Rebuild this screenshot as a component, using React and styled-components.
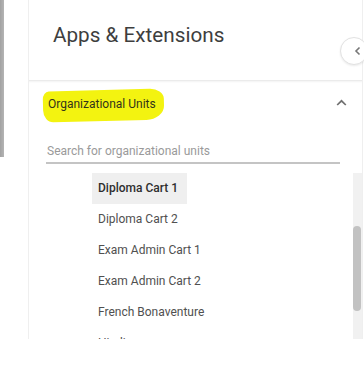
import React from "react";
import styled, { createGlobalStyle } from "styled-components";

const Global = createGlobalStyle`
  html, body { margin: 0; padding: 0; background: #fff; }
  body { font-family: Roboto, "Liberation Sans", Arial, sans-serif; }
  * { box-sizing: border-box; }
`;

const Page = styled.div`
  position: relative;
  width: 364px;
  height: 366px;
  overflow: hidden;
  display: flex;
  align-items: flex-start;
  gap: 24px;
`;

const EdgeBar = styled.div`
  width: 4px;
  height: 157px;
  background: linear-gradient(90deg, #a2a2a2, #b4b4b4);
`;

const Panel = styled.div`
  position: relative;
  width: 335px;
  height: 339px;
  border-left: 1px solid #efefef;
  border-right: 1px solid #efefef;
  display: flex;
  flex-direction: column;
`;

const Header = styled.div`
  height: 81px;
  padding: 22px 0 0 24px;
  border-bottom: 1px solid #ebebeb;
`;

const Title = styled.h1`
  margin: 0;
  font-size: 20.7px;
  font-weight: 400;
  line-height: 26px;
  color: #3e3e3e;
`;

const CollapseButton = styled.button`
  position: absolute;
  left: 311px;
  top: 37px;
  width: 28px;
  height: 28px;
  border-radius: 50%;
  border: 1px solid #e2e2e2;
  background: #fff;
  box-shadow: 0 1px 2px rgba(0, 0, 0, 0.08);
  padding: 0 0 0 7px;
  display: flex;
  align-items: center;
  justify-content: center;
  color: #777;
`;

const Section = styled.div`
  flex: 1;
  min-height: 0;
  display: flex;
  flex-direction: column;
  box-shadow: inset 0 2px 2px -1px rgba(0, 0, 0, 0.05);
`;

const SectionHeader = styled.div`
  height: 44px;
  display: flex;
  align-items: center;
  justify-content: space-between;
  padding: 0 15px 0 19px;
`;

const Highlight = styled.span`
  position: relative;
  top: 1px;
  font-size: 12px;
  color: #34341a;
  z-index: 0;
  &::before {
    content: "";
    position: absolute;
    left: -5px;
    right: -8px;
    top: -7px;
    bottom: -10px;
    background: #f3f310;
    border-radius: 6px 14px 18px 10px / 8px 10px 14px 12px;
    transform: rotate(-1.5deg);
    z-index: -1;
  }
`;

const Chevron = styled.svg`
  display: block;
`;

const SearchField = styled.input`
  margin: 13px 22px 0 17px;
  height: 26px;
  border: none;
  border-bottom: 2px solid #c4c4c4;
  padding: 3px 0 0 1px;
  font-family: inherit;
  font-size: 12px;
  color: #444;
  outline: none;
  background: transparent;
  &::placeholder { color: #9a9a9a; }
`;

const ListArea = styled.div`
  margin-top: 9px;
  height: 167px;
  display: flex;
  overflow: hidden;
`;

const Items = styled.ul`
  flex: 1;
  margin: 0;
  padding: 0 0 0 63px;
  list-style: none;
`;

const Row = styled.li`
  height: 31px;
`;

const Item = styled.span`
  display: inline-flex;
  align-items: center;
  height: 31px;
  padding: 0 9px 0 6px;
  font-size: 12px;
  color: ${(p) => (p.$active ? "#2e2e2e" : "#505050")};
  font-weight: ${(p) => (p.$active ? 500 : 400)};
  background: ${(p) => (p.$active ? "#efefef" : "transparent")};
`;

const Track = styled.div`
  width: 9px;
  height: 167px;
  background: #f1f1f1;
  padding-top: 53px;
`;

const Thumb = styled.div`
  width: 8px;
  height: 85px;
  border-radius: 4px;
  background: #c2c2c2;
`;

const units = [
  "Diploma Cart 1",
  "Diploma Cart 2",
  "Exam Admin Cart 1",
  "Exam Admin Cart 2",
  "French Bonaventure",
  "Hindi",
];

export default function App() {
  return (
    <>
      <Global />
      <Page>
        <EdgeBar />
        <Panel>
          <Header>
            <Title>Apps &amp; Extensions</Title>
          </Header>
          <CollapseButton aria-label="Collapse">
            <svg width="7" height="10" viewBox="0 0 7 10">
              <path d="M5.5 1.5 L2 5 L5.5 8.5" fill="none" stroke="#777" strokeWidth="1.6" />
            </svg>
          </CollapseButton>
          <Section>
            <SectionHeader>
              <Highlight>Organizational Units</Highlight>
              <Chevron width="11" height="7" viewBox="0 0 11 7">
                <path d="M1.2 6 L5.5 1.8 L9.8 6" fill="none" stroke="#707070" strokeWidth="1.7" />
              </Chevron>
            </SectionHeader>
            <SearchField placeholder="Search for organizational units" />
            <ListArea>
              <Items>
                {units.map((u, i) => (
                  <Row key={u}>
                    <Item $active={i === 0}>{u}</Item>
                  </Row>
                ))}
              </Items>
              <Track>
                <Thumb />
              </Track>
            </ListArea>
          </Section>
        </Panel>
      </Page>
    </>
  );
}
